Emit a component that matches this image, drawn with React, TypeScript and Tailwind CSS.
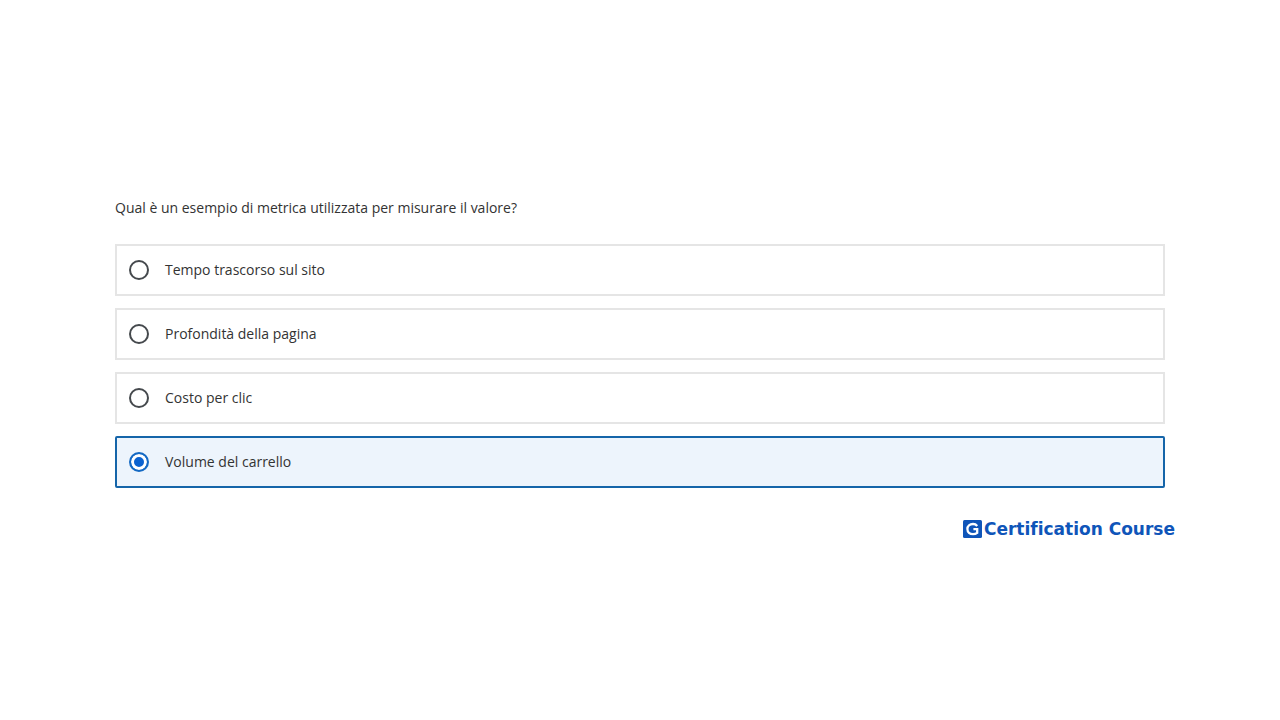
import { useState } from 'react';

const QUESTION = 'Qual è un esempio di metrica utilizzata per misurare il valore?';

const OPTIONS = [
  { id: 'tempo', label: 'Tempo trascorso sul sito' },
  { id: 'profondita', label: 'Profondità della pagina' },
  { id: 'costo', label: 'Costo per clic' },
  { id: 'volume', label: 'Volume del carrello' },
];

function Logo() {
  return (
    <div className="flex items-center gap-[2px] text-[#0f55b9]">
      <svg className="w-[19px] h-[18px]" viewBox="0 0 19 18" fill="none" aria-hidden="true">
        <rect width="19" height="18" rx="1.5" fill="currentColor" />
        <path
          d="M14.2 5.9C13.2 4.7 11.8 4 10 4C6.8 4 4.4 6.1 4.4 9.1S6.8 14.2 10 14.2C11.6 14.2 13 13.8 14.2 12.9V9.2H10.4"
          stroke="white"
          strokeWidth="2.3"
        />
      </svg>
      <span className="font-['DejaVu_Sans',sans-serif] text-[17px] leading-[18px] font-bold [font-variant-ligatures:none]">
        Certification Course
      </span>
    </div>
  );
}

export default function App() {
  const [selected, setSelected] = useState('volume');

  return (
    <main className="min-h-screen bg-white px-6 pt-48 font-['Open_Sans',sans-serif] text-sm text-[#333]">
      <div className="w-full max-w-[1050px] mx-auto">
        <fieldset>
          <legend className="leading-8 mb-5">{QUESTION}</legend>
          <div className="flex flex-col gap-3">
            {OPTIONS.map(option => (
              <label
                key={option.id}
                className={`flex items-center gap-4 border-2 px-3 py-[14px] leading-5 cursor-pointer ${
                  selected === option.id
                    ? 'rounded-xs border-[#1565a9] bg-[#edf4fc]'
                    : 'border-[#e5e5e5] bg-white'
                }`}
              >
                <input
                  type="radio"
                  name="answer"
                  value={option.id}
                  checked={selected === option.id}
                  onChange={() => setSelected(option.id)}
                  className="appearance-none w-5 h-5 shrink-0 rounded-full border-2 border-[#45494d] bg-white checked:border-[#1469c3] checked:bg-[#0b62d0] checked:shadow-[inset_0_0_0_3px_white]"
                />
                {option.label}
              </label>
            ))}
          </div>
        </fieldset>
        <div className="flex justify-end mt-8 -mr-[10px]">
          <Logo />
        </div>
      </div>
    </main>
  );
}
